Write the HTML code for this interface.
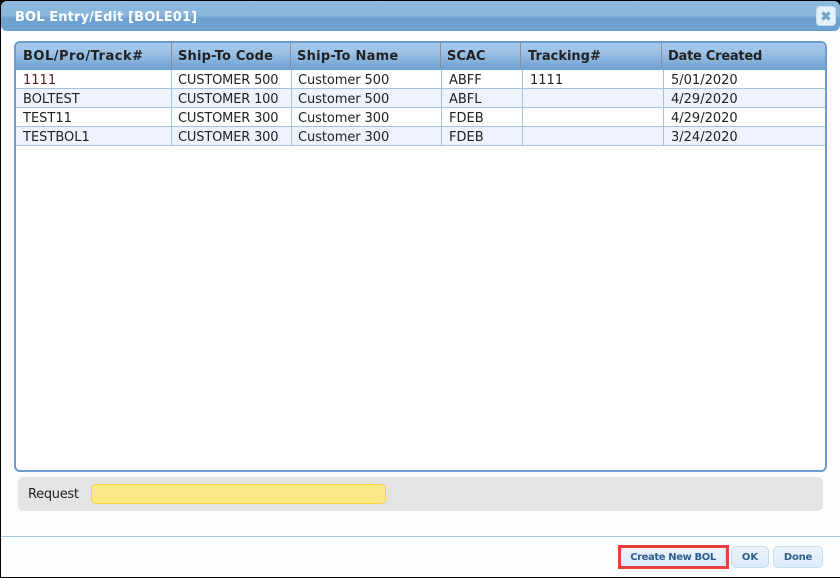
<!DOCTYPE html>
<html><head><meta charset="utf-8"><style>
html,body{margin:0;padding:0;background:#000}
body{width:840px;height:578px;position:relative;overflow:hidden;font-family:"DejaVu Sans","Liberation Sans",sans-serif;color:#222}
div{position:absolute;box-sizing:border-box}
.t{white-space:nowrap;line-height:18px;font-size:13px}
.h{font-weight:bold;color:#222;line-height:18px;font-size:13px;white-space:nowrap;top:48px}
.hd{top:43px;width:1px;height:25px;background:#8a8f98}
.vl{top:70px;width:1px;height:76px;background:#a3c2e3}
.r{left:16px;width:809px;height:19px;border-bottom:1px solid #a3c2e3}
.b{top:546px;height:22px;border:1px solid #c5dbf0;border-radius:5px;background:linear-gradient(#edf4fc,#dcebfa);color:#2f5f8f;font-weight:bold;font-size:10px;line-height:21px;text-align:center;white-space:nowrap}
.c{letter-spacing:-.17px}
.n{letter-spacing:-.08px}
</style></head><body>
<div style="left:1px;top:1px;width:839px;height:576px;background:#fcfdfd;border-radius:6px 6px 0 0"></div>
<div style="left:1px;top:1px;width:839px;height:30px;border-radius:6px 6px 6px 6px;background:linear-gradient(#8bb8dc 0,#8ab7db 50%,#6ca1cf 60%,#6fa4d1 100%);border-bottom:1px solid #5f9bd0"></div>
<div style="left:15px;top:9px;font-size:13px;line-height:18px;font-weight:bold;color:#fff;white-space:nowrap;letter-spacing:.13px">BOL Entry/Edit [BOLE01]</div>
<div style="left:816px;top:6px;width:20px;height:20px;border-radius:4px;background:#e6f0f9;border:1px solid #c6dbee">
<svg width="18" height="18" style="position:absolute;left:0;top:0"><path d="M5.5 5.5L12.5 12.5M12.5 5.5L5.5 12.5" stroke="#6ba3d3" stroke-width="3.2" fill="none"/></svg></div>

<div style="left:14px;top:41px;width:813px;height:431px;background:#fff;border:2px solid #6c9ccf;border-radius:6px"></div>
<div style="left:16px;top:43px;width:809px;height:27px;background:linear-gradient(#a5c9eb 0,#9cc2e6 35%,#6d9fd0 100%);border-radius:4px 4px 0 0"></div>
<div class="hd" style="left:171px"></div><div class="hd" style="left:290px"></div><div class="hd" style="left:440px"></div><div class="hd" style="left:520px"></div><div class="hd" style="left:661px"></div>
<div class="h" style="left:23px;letter-spacing:.5px">BOL/Pro/Track#</div>
<div class="h" style="left:178px;letter-spacing:.17px">Ship-To Code</div>
<div class="h" style="left:297px;letter-spacing:.25px">Ship-To Name</div>
<div class="h" style="left:447px">SCAC</div>
<div class="h" style="left:528px">Tracking#</div>
<div class="h" style="left:668px;letter-spacing:-.25px">Date Created</div>

<div class="r" style="top:70px;background:#fff"></div>
<div class="r" style="top:89px;background:#edf2fc"></div>
<div class="r" style="top:108px;background:#fff"></div>
<div class="r" style="top:127px;background:#edf2fc"></div>
<div class="vl" style="left:171px"></div><div class="vl" style="left:291px"></div><div class="vl" style="left:441px"></div><div class="vl" style="left:522px"></div><div class="vl" style="left:663px"></div>

<div class="t" style="left:23px;top:72px;color:#5a1a1a">1111</div><div class="t c" style="left:178px;top:72px">CUSTOMER 500</div><div class="t n" style="left:298px;top:72px">Customer 500</div><div class="t" style="left:449px;top:72px">ABFF</div><div class="t" style="left:530px;top:72px">1111</div><div class="t" style="left:671px;top:72px">5/01/2020</div>
<div class="t" style="left:23px;top:91px">BOLTEST</div><div class="t c" style="left:178px;top:91px">CUSTOMER 100</div><div class="t n" style="left:298px;top:91px">Customer 500</div><div class="t" style="left:449px;top:91px">ABFL</div><div class="t" style="left:671px;top:91px">4/29/2020</div>
<div class="t" style="left:23px;top:110px">TEST11</div><div class="t c" style="left:178px;top:110px">CUSTOMER 300</div><div class="t n" style="left:298px;top:110px">Customer 300</div><div class="t" style="left:449px;top:110px">FDEB</div><div class="t" style="left:671px;top:110px">4/29/2020</div>
<div class="t" style="left:23px;top:129px">TESTBOL1</div><div class="t c" style="left:178px;top:129px">CUSTOMER 300</div><div class="t n" style="left:298px;top:129px">Customer 300</div><div class="t" style="left:449px;top:129px">FDEB</div><div class="t" style="left:671px;top:129px">3/24/2020</div>

<div style="left:18px;top:477px;width:805px;height:34px;background:#e4e4e4;border-radius:5px"></div>
<div class="t" style="left:28px;top:486px;letter-spacing:-.3px">Request</div>
<div style="left:91px;top:484px;width:295px;height:20px;background:#fbe986;border:1px solid #f5d442;border-radius:5px"></div>

<div style="left:1px;top:536px;width:839px;height:1px;background:#a3cbe8"></div>

<div class="b" style="left:620px;width:106px;letter-spacing:-.4px">Create New BOL</div>
<div style="left:618px;top:545px;width:111px;height:24px;border:3px solid #e8413c"></div>
<div class="b" style="left:731px;width:38px">OK</div>
<div class="b" style="left:773px;width:50px;letter-spacing:-.2px">Done</div>
</body></html>
